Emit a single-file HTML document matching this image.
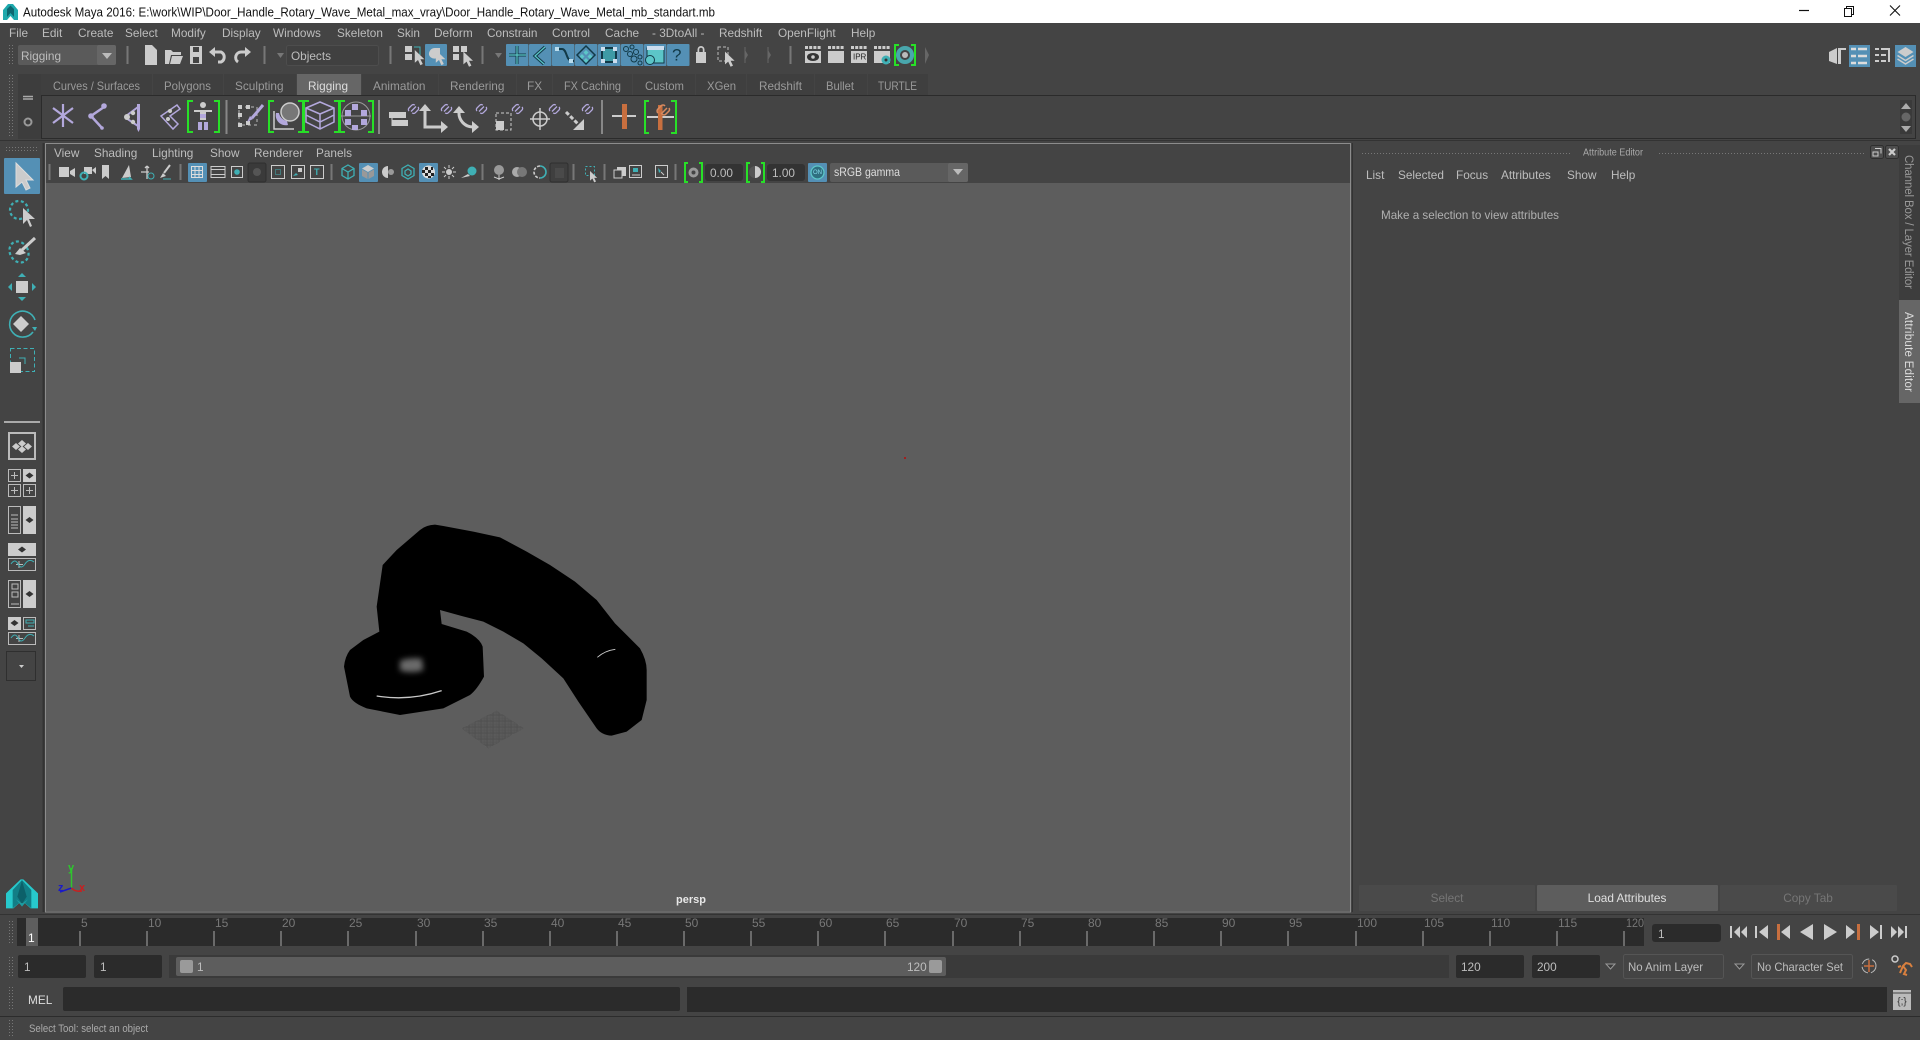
<!DOCTYPE html>
<html><head><meta charset="utf-8"><title>Autodesk Maya 2016</title>
<style>
html,body{margin:0;padding:0;background:#444;overflow:hidden;width:1920px;height:1040px}
svg{display:block;position:absolute;left:0;top:0}
text{font-family:"Liberation Sans",sans-serif;font-size:11.8px;fill:#bdbdbd;dominant-baseline:central;white-space:pre}
text.tab{fill:#9a9a9a}
.l{fill:#ccc}.ls{fill:none;stroke:#ccc}
.t{fill:#3fb0b5}.ts{fill:none;stroke:#3fb0b5}
.p{fill:#b3a8dc}.ps{fill:none;stroke:#b3a8dc}
.g{fill:none;stroke:#27e027;stroke-width:2}
.tl{fill:#777;font-size:12px}
</style></head><body>
<svg width="1920" height="1040" viewBox="0 0 1920 1040" xmlns="http://www.w3.org/2000/svg">
<defs>
<pattern id="dots" width="3" height="3" patternUnits="userSpaceOnUse"><rect width="1" height="1" fill="#777"/></pattern>
<pattern id="gridp" width="3.600" height="3.600" patternUnits="userSpaceOnUse"><rect width="3.600" height="3.600" fill="#4e4e4e"/><rect width="1.600" height="1.600" fill="#777"/></pattern>
<path id="arr" d="M0 0V16L4 12.5L7 19L10 17.5L7 11.5L12 11.5Z"/>
<g id="lnk"><path d="M-1 4.500L4 -.5M-3 4a2.100 2.100 0 0 1 0-3l2.800-2.800a2.100 2.100 0 0 1 3 0M6 0a2.100 2.100 0 0 1 0 3L3.200 5.800a2.100 2.100 0 0 1-3 0" fill="none" stroke="#b3a8dc" stroke-width="1.300"/></g>
<g id="clap"><path d="M0 1.500h16" stroke="#ccc" stroke-width="3" stroke-dasharray="3 1.200"/><rect y="5" width="16" height="12" fill="#ccc"/></g>
</defs>
<rect width="1920" height="1040" fill="#444"/>

<!-- title bar -->
<rect width="1920" height="23" fill="#fff"/>
<path d="M3 20V10L8 4h5l5 6v10h-4l-3.500-4-3.500 4z" fill="#1fa9ad"/><path d="M7 17V9l3.500-3.500L14 9v8l-3.500-4z" fill="#0d6770"/>
<text x="23" y="12" style="font-size:13px;fill:#111" textLength="692" lengthAdjust="spacingAndGlyphs">Autodesk Maya 2016: E:\work\WIP\Door_Handle_Rotary_Wave_Metal_max_vray\Door_Handle_Rotary_Wave_Metal_mb_standart.mb</text>
<path d="M1799 10.500h10" stroke="#111" stroke-width="1.200"/>
<path d="M1844.500 8.500h7v8h-7zM1846.500 8.500V6.500h7v8h-2" fill="none" stroke="#111"/>
<path d="M1890 5.500l10 10M1900 5.500l-10 10" stroke="#111" stroke-width="1.100"/>

<!-- menu -->
<g>
<text x="9" y="33">File</text><text x="42" y="33">Edit</text><text x="78" y="33">Create</text><text x="125" y="33">Select</text><text x="171" y="33">Modify</text><text x="222" y="33">Display</text><text x="273" y="33">Windows</text><text x="337" y="33">Skeleton</text><text x="397" y="33">Skin</text><text x="434" y="33">Deform</text><text x="487" y="33">Constrain</text><text x="552" y="33">Control</text><text x="605" y="33">Cache</text><text x="652" y="33">- 3DtoAll -</text><text x="719" y="33">Redshift</text><text x="778" y="33">OpenFlight</text><text x="851" y="33">Help</text>
</g>

<!-- status line -->
<rect x="8" y="45" width="5" height="20" fill="url(#dots)"/>
<rect x="18" y="45" width="98" height="20" rx="2" fill="#5a5a5a"/><rect x="97" y="45" width="19" height="20" rx="2" fill="#666"/>
<path d="M102 53h10l-5 6z" fill="#bbb"/>
<text x="21" y="56">Rigging</text>
<path d="M127.500 46v18M264.500 46v18M390.500 46v18M482.500 46v18M790.500 46v18" stroke="#777" stroke-width="2"/>
<path class="l" d="M145 45h7l5 5v15h-12z"/>
<path class="l" d="M165 50h6l2 2h8v3h-10l-2 9h-4zM172 56h11l-3 8h-10z"/>
<path class="l" d="M190 46h12v18h-12zM193 47v5h6v-5zM193 57v6h6v-6z" fill-rule="evenodd"/>
<path class="ls" stroke-width="3" d="M212 52h9a5.500 5.500 0 0 1 0 10h-3"/><path class="l" d="M209 52l6-5v10z"/>
<path class="ls" stroke-width="3" d="M248 52h-7a5.500 5.500 0 0 0-3 10"/><path class="l" d="M251 52l-6-5v10z"/>
<path d="M277 53h7l-3.500 5z" fill="#777"/>
<rect x="286.500" y="45.500" width="92" height="20" rx="2" fill="#404040" stroke="#4d4d4d"/>
<text x="291" y="56">Objects</text>
<path class="l" d="M405 46h7v6h-7zM405 54h7v6h-7z"/><path class="ts" d="M414 47h6v8"/><use href="#arr" x="416" y="50" class="l" transform="translate(82 10) scale(.8)"/>
<rect x="425" y="44" width="22" height="22" rx="1" fill="#5490b5"/><path class="l" d="M429 55a6 6 0 0 1 6-7h5v7a6 6 0 0 1-11 0z"/><use href="#arr" class="l" x="436" y="50" transform="translate(87 10) scale(.8)"/>
<path class="l" d="M453 46h6v6h-6zM461 46h6v6h-6zM453 54h6v6h-6z"/><use href="#arr" class="l" x="463" y="52" transform="translate(93 10) scale(.8)"/>
<path d="M495 53h7l-3.500 5z" fill="#777"/>
<g>
<g fill="#5490b5"><rect x="506" y="44" width="22.500" height="22" rx="1"/><rect x="529" y="44" width="22.500" height="22" rx="1"/><rect x="552" y="44" width="22.500" height="22" rx="1"/><rect x="575" y="44" width="22.500" height="22" rx="1"/><rect x="598" y="44" width="22.500" height="22" rx="1"/><rect x="621" y="44" width="22.500" height="22" rx="1"/><rect x="644" y="44" width="22.500" height="22" rx="1"/><rect x="667" y="44" width="22.500" height="22" rx="1"/></g>
<path d="M517 46v18M509 55h17" stroke="#123a48" stroke-width="3"/><path d="M517 46v18M509 55h17" stroke="#5cc6c8" stroke-width="1.200"/>
<path d="M545 47l-10 9 9 8" fill="none" stroke="#123a48" stroke-width="3.200"/><path d="M545 47l-10 9 9 8" fill="none" stroke="#5cc6c8" stroke-width="1.200"/>
<path d="M556 49h6c5 0 4 12 10 12h2" fill="none" stroke="#123a48" stroke-width="2"/><rect x="555" y="47" width="4" height="4" fill="#bde"/><rect x="569" y="59" width="4" height="4" fill="#bde"/>
<path d="M586 46l9 9-9 9-9-9z" fill="none" stroke="#123a48" stroke-width="1.500"/><path d="M586 50l2.500 2.500-2.500 2.500-2.500-2.500zM582 54l2.500 2.500-2.500 2.500-2.500-2.500zM590 54l2.500 2.500-2.500 2.500-2.500-2.500zM586 58l2.500 2.500-2.500 2.500-2.500-2.500z" fill="#5cc6c8"/>
<rect x="602" y="48" width="14" height="14" fill="#3e9aa5" stroke="#123a48" stroke-width="2"/><path d="M601 47h4v4h-4zM613 47h4v4h-4zM601 59h4v4h-4zM613 59h4v4h-4z" fill="#cde"/>
<g fill="none" stroke="#123a48"><circle cx="626" cy="49" r="2.500"/><circle cx="632" cy="47" r="2"/><circle cx="630" cy="54" r="2.500"/><circle cx="636" cy="52" r="2.500"/><circle cx="634" cy="59" r="3"/><circle cx="640" cy="57" r="2"/><circle cx="640" cy="63" r="2"/></g>
<rect x="647" y="48" width="17" height="15" fill="#5cc6c8" stroke="#123a48"/><rect x="647" y="46" width="17" height="4" fill="#cde"/><circle cx="650" cy="60" r="4.500" fill="#5cc6c8" stroke="#123a48"/>
<text x="672" y="55" style="font-size:17px;fill:#123a48">?</text>
</g>
<path class="l" d="M696 52h10v11h-10zM697.500 52v-2.500a3.500 3.500 0 0 1 7 0V52h-1.700v-2.500a1.800 1.800 0 0 0-3.600 0V52z"/>
<rect x="718" y="47" width="10" height="14" fill="none" stroke="#bbb" stroke-dasharray="3 2"/><use href="#arr" class="l" x="725" y="52" transform="translate(145 10) scale(.8)"/>
<path d="M745 50l3 5-3 5zM768 50l3 5-3 5z" fill="#666"/><path d="M745 47v16M768 47v16" stroke="#666"/>
<use href="#clap" x="805" y="46"/><use href="#clap" x="828" y="46"/><use href="#clap" x="851" y="46"/><use href="#clap" x="874" y="46"/>
<ellipse cx="813" cy="57" rx="6" ry="4" fill="#333"/><circle cx="813" cy="57" r="1.800" fill="#ccc"/>
<text x="853" y="57" style="font-size:8px;fill:#222">IPR</text>
<circle cx="886" cy="60" r="4.500" fill="#3fb0b5"/><circle cx="886" cy="60" r="1.500" fill="#333"/>
<path class="g" d="M899 45h-4v20h4M911 45h4v20h-4"/><circle cx="905" cy="55" r="7" fill="none" stroke="#49a7ad" stroke-width="4"/><circle cx="905" cy="55" r="3" fill="#bbb"/>
<path d="M925 47l4 8-4 9z" fill="#666"/>

<!-- workspace icons -->
<path class="l" d="M1829 52l8-4v16l-8-3zM1838 48h8v2h-5v14h-3z"/>
<rect x="1849" y="45" width="21" height="22" fill="#5490b5"/><path d="M1851 49h5M1858 49h9M1851 56h5M1858 56h9M1851 63h5M1858 63h9" stroke="#ddd" stroke-width="2.500"/>
<path d="M1875 49h4M1881 49h9M1875 55h4M1881 55h5M1875 61h4M1881 61h5M1889 49v13" stroke="#ccc" stroke-width="2"/>
<rect x="1895" y="45" width="21" height="22" fill="#5490b5"/><path d="M1905.500 47l8 5-8 5-8-5z" class="l"/><path d="M1897.500 55.500l8 5 8-5M1897.500 59l8 5 8-5" class="ls" stroke-width="1.500"/>

<!-- shelf -->
<rect x="8" y="75" width="5" height="62" fill="url(#dots)"/>
<rect x="18" y="74" width="23" height="65" fill="#3d3d3d"/>
<path d="M23 96.500h10M23 99h10" stroke="#aaa" stroke-width="1.500"/>
<circle cx="28" cy="122" r="3.500" fill="none" stroke="#999" stroke-width="2"/>
<g fill="#3f3f3f">
<rect x="41" y="74" width="111" height="21"/><rect x="153" y="74" width="70" height="21"/><rect x="224" y="74" width="72" height="21"/><rect x="362" y="74" width="76" height="21"/><rect x="439" y="74" width="77" height="21"/><rect x="517" y="74" width="35" height="21"/><rect x="553" y="74" width="79" height="21"/><rect x="633" y="74" width="62" height="21"/><rect x="696" y="74" width="50" height="21"/><rect x="747" y="74" width="67" height="21"/><rect x="815" y="74" width="52" height="21"/><rect x="868" y="74" width="60" height="21"/>
</g>
<rect x="297" y="74" width="64" height="21" fill="#666"/>
<g>
<text x="53" y="86" class="tab" textLength="87" lengthAdjust="spacingAndGlyphs">Curves / Surfaces</text><text x="164" y="86" class="tab" textLength="47" lengthAdjust="spacingAndGlyphs">Polygons</text><text x="235" y="86" class="tab">Sculpting</text><text x="308" y="86" style="fill:#ddd">Rigging</text><text x="373" y="86" class="tab">Animation</text><text x="450" y="86" class="tab">Rendering</text><text x="527" y="86" class="tab">FX</text><text x="564" y="86" class="tab" textLength="57" lengthAdjust="spacingAndGlyphs">FX Caching</text><text x="645" y="86" class="tab" textLength="39" lengthAdjust="spacingAndGlyphs">Custom</text><text x="707" y="86" class="tab" textLength="29" lengthAdjust="spacingAndGlyphs">XGen</text><text x="759" y="86" class="tab" textLength="43" lengthAdjust="spacingAndGlyphs">Redshift</text><text x="826" y="86" class="tab" textLength="28" lengthAdjust="spacingAndGlyphs">Bullet</text><text x="878" y="86" class="tab" textLength="39" lengthAdjust="spacingAndGlyphs">TURTLE</text>
</g>
<rect x="41.500" y="95.500" width="1874" height="43" fill="#444" stroke="#2b2b2b"/>
<rect x="1900" y="100" width="12" height="34" fill="#3a3a3a"/><path d="M1906 103l5 6h-10zM1906 132l5-6h-10z" fill="#aaa"/><circle cx="1906" cy="117" r="4.500" fill="#666"/>
<!-- shelf icons -->
<path class="ps" stroke-width="2.200" d="M63 104v23M53 108l20 15M73 108l-20 15"/>
<path class="ps" stroke-width="2.500" d="M104 107l-13 9 11 12"/><circle cx="104" cy="106" r="2.800" class="p"/><circle cx="91" cy="116" r="2.800" class="p"/><circle cx="102" cy="128" r="1.800" class="p"/>
<path class="ps" stroke-width="2" d="M126 116l12-9M126 118l12 8"/><path class="p" d="M137 104h3v25l-1.500 3-1.500-3z"/><circle cx="127" cy="117" r="3" class="l"/><circle cx="133" cy="113" r="2.200" class="l"/><circle cx="133" cy="122" r="2.200" class="l"/>
<path class="ps" stroke-width="1.500" d="M177 105l-16 11 12 13 5-5-8-8 10-7z"/><circle cx="170" cy="111" r="2" class="l"/><circle cx="168" cy="119" r="2" class="l"/>
<path class="g" d="M193 101h-5V132h5M214 101h5V132h-5"/>
<circle cx="203" cy="105" r="3" class="l"/><path class="l" d="M194 110h18v2h-6v8h-6v-8h-6z"/><rect x="198" y="122" width="4" height="8" fill="#b3a8dc"/><rect x="204" y="122" width="4" height="8" fill="#b3a8dc"/><rect x="200" y="114" width="6" height="4" fill="#b3a8dc"/>
<path d="M226.500 100v34" stroke="#888" stroke-width="2"/>
<rect x="239" y="107" width="18" height="18" fill="none" stroke="#bbb" stroke-dasharray="3 3"/><g class="l"><rect x="238" y="105" width="4" height="4"/><rect x="246" y="105" width="4" height="4"/><rect x="238" y="113" width="4" height="4"/><rect x="246" y="121" width="4" height="4"/><rect x="238" y="123" width="4" height="4"/></g><path class="ps" stroke-width="3" d="M263 105l-11 13"/><path class="p" d="M247 122l3-6 3 3z"/>
<path class="g" d="M274 101h-5V132h5M298 101h5V132h-5"/><circle cx="290" cy="112" r="9" fill="#777" stroke="#ccc" stroke-width="1.500"/><path class="p" d="M276 113a10 10 0 0 0 12 12l-1-4a10 10 0 0 1-8-8z"/><path class="ls" stroke-width="1.500" d="M274 111v18h20"/>
<path class="g" d="M309 101h-5V132h5M334 101h5V132h-5"/><path class="ps" stroke-width="1.500" d="M306 108l14-6 14 6v14l-14 7-14-7zM306 108l14 6 14-6M320 114v15M306 115l14 7 14-7"/>
<path class="g" d="M345 101h-5V132h5M368 101h5V132h-5"/><circle cx="356" cy="116" r="14" fill="none" stroke="#999"/><path d="M341 116h30" stroke="#999"/><g class="p"><rect x="352" y="104" width="6" height="6"/><rect x="345" y="110" width="6" height="6"/><rect x="361" y="110" width="6" height="6"/><rect x="345" y="119" width="6" height="6"/><rect x="361" y="119" width="6" height="6"/><rect x="352" y="125" width="6" height="5"/></g>
<path d="M379 100v34" stroke="#888" stroke-width="2"/>
<g class="l"><path d="M389 112h17v6h-17zM392 120h16v6h-16z"/></g><path class="ls" d="M392 118v8"/><use href="#lnk" x="412" y="107"/>
<path class="ls" stroke-width="3" d="M425 110v17h17"/><path class="l" d="M425 104l6 7h-12zM448 127l-7-6v12z"/><use href="#lnk" x="445" y="107"/>
<path class="ls" stroke-width="3" d="M459 112a14 14 0 0 0 14 15"/><path class="l" d="M459 106l6 7h-12zM479 127l-7-6v12z"/><use href="#lnk" x="480" y="107"/>
<rect x="496" y="113" width="15" height="17" fill="none" stroke="#ccc" stroke-dasharray="3 2"/><rect x="496" y="121" width="8" height="9" class="l"/><use href="#lnk" x="516" y="107"/>
<circle cx="540" cy="119" r="7" fill="none" stroke="#ccc" stroke-width="1.500"/><path d="M540 108v22M530 119h20" stroke="#ccc" stroke-width="1.500"/><use href="#lnk" x="553" y="107"/>
<path class="ls" stroke-width="3" stroke-dasharray="4 2" d="M566 112l14 14"/><path class="l" d="M584 130v-11l-11 11z"/><use href="#lnk" x="586" y="107"/>
<path d="M602 100v34" stroke="#888" stroke-width="2"/>
<path d="M612 116h24" stroke="#ccc" stroke-width="2"/><rect x="622" y="104" width="5" height="25" fill="#c86f3f"/>
<path class="g" d="M649 101h-4V133h4M671 101h5V133h-5"/><path d="M647 117h27" stroke="#ccc" stroke-width="2"/><rect x="658" y="105" width="4.500" height="25" fill="#c86f3f"/><path d="M661 114l6-6M658 113a2.600 2.600 0 0 1 0-4l3-3a2.600 2.600 0 0 1 4 0M669 108a2.600 2.600 0 0 1 0 3l-3 3a2.600 2.600 0 0 1-4 0" fill="none" stroke="#d98a5f" stroke-width="1.500"/>

<!-- separators -->
<path d="M0 140.500h1920" stroke="#333" stroke-width="1"/>

<!-- left toolbox -->
<rect x="4" y="146" width="34" height="6" fill="url(#dots)"/>
<rect x="4" y="158" width="36" height="36" rx="1" fill="#5490b5"/>
<path class="l" d="M16 163V187L22 182L26 190L30 188L26 180L33 180Z" stroke="#ddd"/>
<ellipse cx="19" cy="210" rx="9" ry="9" fill="none" stroke="#3fb0b5" stroke-width="2.200" stroke-dasharray="3 2.500" transform="rotate(35 19 210)"/>
<path class="l" d="M23 208V224L27 220L30 227L32 226L29 219L35 219Z"/>
<ellipse cx="19" cy="252" rx="9" ry="11" fill="none" stroke="#3fb0b5" stroke-width="2.200" stroke-dasharray="3 2.500" transform="rotate(-30 19 252)"/>
<path class="ls" stroke-width="3" d="M35 238l-13 12"/><path class="l" d="M15 254l5-6 6 5-6 2z"/>
<rect x="16" y="281" width="12" height="12" class="l"/><path class="t" d="M22 273l4 4h-8zM22 301l4-4h-8zM8 287l4-4v8zM36 287l-4-4v8z"/>
<path d="M35 320a13 13 0 1 0-2 12" class="ts" stroke-width="1.600"/><path class="t" d="M32 327h5l-2 4z"/><path class="l" d="M21 316l8 8-8 8-8-8z"/>
<rect x="10.500" y="348.500" width="24" height="23" fill="none" stroke="#3fb0b5" stroke-dasharray="4 2.500"/><path class="ts" d="M19 358h6v6"/><rect x="10" y="362" width="11" height="11" class="l"/>
<path d="M4 422h36" stroke="#aaa" stroke-width="2"/>
<rect x="9" y="433" width="26" height="26" fill="none" stroke="#bbb" stroke-width="2"/>
<path d="M22 440l4 3.500-4 3.500-4-3.500zM16 443l4 3.500-4 3.500-4-3.500zM28 443l4 3.500-4 3.500-4-3.500zM22 446l4 3.500-4 3.500-4-3.500z" fill="#ccc"/>
<g fill="none" stroke="#bbb">
<rect x="8.500" y="469.500" width="12" height="12"/><rect x="8.500" y="484.500" width="12" height="12"/><rect x="23.500" y="484.500" width="12" height="12"/>
<rect x="8.500" y="506.500" width="12" height="27"/><rect x="8.500" y="558.500" width="27" height="12"/><rect x="8.500" y="580.500" width="12" height="27"/><rect x="23.500" y="617.500" width="12" height="12"/><rect x="8.500" y="632.500" width="27" height="12"/>
<path d="M14.500 472v7M11 475.500h7M14.500 487v7M11 490.500h7M29.500 487v7M26 490.500h7M11 515h7M11 519h7M11 522h7M11 525h7M11 528h7M19 561v7M16 564.500h7M19 635v7M16 638.500h7"/>
</g>
<g fill="#ccc"><rect x="23" y="469" width="13" height="13"/><rect x="23" y="506" width="13" height="28"/><rect x="8" y="543" width="28" height="13"/><rect x="23" y="580" width="13" height="28"/><rect x="8" y="617" width="13" height="13"/></g>
<g fill="#333"><path d="M29.500 472.500l4 3-4 3-4-3zM29.500 517l4 3-4 3-4-3zM22 546.500l4 3-4 3-4-3zM29.500 591l4 3-4 3-4-3zM14.500 620l4 3-4 3-4-3z"/></g>
<path class="ts" d="M11 564q4-6 7 0t7 0t9-2M11 638q4-6 7 0t7 0t9-2M26 620h8v3h-8zM28 626h6"/>
<g fill="none" stroke="#bbb"><rect x="12" y="584" width="6" height="5"/><rect x="12" y="592" width="6" height="5"/><path d="M11 604h8"/></g>
<rect x="6.500" y="651.500" width="29" height="29" fill="none" stroke="#2f2f2f"/><path d="M19 665h5l-2.500 3z" fill="#ccc"/>
<path d="M43.500 143V912" stroke="#333" stroke-width="2"/>
<!-- logo -->
<g transform="translate(0 460) scale(.33333)">
<path d="M18 1300L62 1258H70L114 1300V1345H92L66 1322L40 1345H18Z" fill="#27c9cc"/>
<path d="M38 1345V1290L66 1260L94 1290V1345L66 1322Z" fill="#127e86"/>
<path d="M52 1310L66 1262L80 1310L66 1332Z" fill="#0c6069"/>
<path d="M48 1318L66 1340L84 1318L66 1330Z" fill="#1b9ea3"/>
</g>

<!-- viewport -->
<rect x="45" y="143" width="1306" height="770" fill="#444"/>
<rect x="46" y="183" width="1304" height="728" fill="#5d5d5d"/>
<rect x="45.500" y="143.500" width="1305" height="768.500" fill="none" stroke="#8c8c8c"/>
<rect x="46" y="144" width="1304" height="39" fill="#444"/>
<text x="54" y="153">View</text><text x="94" y="153">Shading</text><text x="152" y="153">Lighting</text><text x="210" y="153">Show</text><text x="254" y="153">Renderer</text><text x="316" y="153">Panels</text>
<!-- viewport toolbar -->
<path d="M49.500 164v16M180.500 164v16M331.500 164v16M482.500 164v16M573.500 164v16M604.500 164v16M675.500 164v16" stroke="#777" stroke-width="2"/>
<rect x="188" y="163" width="19" height="19" rx="1" fill="#5490b5"/><rect x="359" y="163" width="19" height="19" rx="1" fill="#5490b5"/><rect x="419" y="163" width="19" height="19" rx="1" fill="#5490b5"/>
<rect x="248" y="163" width="18" height="19" rx="2" fill="#3a3a3a" stroke="#2f2f2f"/><rect x="550" y="163" width="18" height="19" rx="2" fill="#3f3f3f" stroke="#2f2f2f"/>
<path class="l" d="M59 167h10v10H59zM70 171l5-3v9l-5-3z"/>
<path class="l" d="M84 167h8v7h-8zM92 170l4-3v7z"/><circle cx="84" cy="176" r="3.500" fill="none" stroke="#3fb0b5" stroke-width="2"/>
<path class="l" d="M102 165h7v14l-3.500-3-3.500 3z"/>
<path class="l" d="M122 178l7-13 2 12z"/><path class="ts" stroke-width="1.500" d="M121 179h10l-2-2"/>
<path class="ls" stroke-width="1.300" d="M147 166v13M141 172h8M147 166l-2 2M147 166l2 2"/><circle cx="151" cy="176" r="3" class="ts"/>
<path class="ls" stroke-width="2" d="M170 165l-6 8"/><path class="l" d="M160 178l3-5 3 3z"/><path class="ts" d="M163 179h8"/>
<path d="M191.500 166.500h11v11h-11zM195 166.500v11M199 166.500v11M191.500 170.500h11M191.500 174.500h11" fill="none" stroke="#ddd"/>
<path d="M211 166.500h14v11h-14zM211 169.500h14M211 174.500h14" fill="none" stroke="#ccc"/>
<rect x="231.500" y="166.500" width="11" height="11" fill="none" stroke="#ccc"/><circle cx="237" cy="172" r="2.800" class="t"/>
<circle cx="257" cy="172" r="4" fill="#555"/>
<rect x="271.500" y="165.500" width="13" height="13" fill="none" stroke="#ccc"/><rect x="275.500" y="169.500" width="5" height="5" fill="none" stroke="#3fb0b5" stroke-dasharray="1 1"/>
<rect x="291.500" y="165.500" width="13" height="13" fill="none" stroke="#ccc"/><path class="t" d="M293 176l3-3 2 2z"/><rect x="298" y="168" width="4" height="4" class="l"/>
<rect x="310.500" y="165.500" width="13" height="13" fill="none" stroke="#ccc"/><text x="314" y="172" style="font-size:9px;font-weight:bold;fill:#3fb0b5">T</text>
<path class="ts" stroke-width="1.300" d="M348 165l6 3.500v7l-6 3.500-6-3.500v-7zM342 168.500l6 3.500 6-3.500M348 172v7"/>
<path class="l" d="M368 165l6 3.500-6 3.500-6-3.500z"/><path fill="#999" d="M362 169.500l5.500 3v6.500l-5.500-3zM374 169.500l-5.500 3v6.500l5.500-3z"/>
<path class="l" d="M388 166a6 6 0 0 0 0 12z"/><circle cx="391" cy="172" r="3" fill="#999"/>
<path class="ts" stroke-width="1.300" d="M408 165l6 3.500v7l-6 3.500-6-3.500v-7zM405 171l3-2 3 2v3l-3 2-3-2z"/>
<circle cx="428.500" cy="172" r="6.500" fill="#ddd"/><path d="M425 167h3v3h-3zM431 167h2v3h-2zM428 170h3v3h-3zM422 170h3v3h-3zM425 173h3v3h-3zM431 173h3v3h-3zM428 176h3v2h-3z" fill="#222"/>
<circle cx="449" cy="172" r="3" class="l"/><path class="ls" d="M449 165v3M449 176v3M442 172h3M453 172h3M444 167l2 2M454 167l-2 2M444 177l2-2M454 177l-2-2"/>
<path class="l" d="M461 178l7-4 2 2z"/><circle cx="472" cy="171" r="4.500" class="t"/>
<circle cx="499" cy="170" r="5" fill="#999"/><path d="M494 177l5 2 5-2M499 175v5" class="ls"/>
<circle cx="517" cy="172" r="5" fill="#aaa"/><circle cx="522" cy="172" r="5" fill="#777"/>
<path d="M540 166a6 6 0 0 0 0 12" class="ls" stroke-width="1.600" stroke-dasharray="3 1.500"/><path d="M540 166a6 6 0 0 1 0 12" class="ts" stroke-width="1.600"/>
<rect x="555" y="168" width="9" height="10" fill="#4a4a4a"/>
<rect x="585.500" y="166.500" width="9" height="9" fill="none" stroke="#3fb0b5" stroke-dasharray="2 2"/><use href="#arr" class="l" x="0" y="0" transform="translate(590 171) scale(.6)"/>
<path class="l" d="M617 167h9v9h-9z"/><rect x="614" y="170" width="8" height="8" fill="#444" stroke="#ccc"/>
<rect x="629.500" y="165.500" width="12" height="12" fill="none" stroke="#ccc"/><rect x="633" y="168" width="5" height="4" class="t"/><path d="M632 175h8" stroke="#ccc"/>
<rect x="655.500" y="165.500" width="12" height="12" fill="none" stroke="#ccc"/><path class="t" d="M658 168l3 3-2 2z"/><path d="M661 172l3 3" stroke="#ccc"/>
<path class="g" d="M688 163h-3v19h3M699 163h3v19h-3"/><circle cx="693.500" cy="172.500" r="5" fill="#999"/><circle cx="693.500" cy="172.500" r="2" fill="#444"/>
<rect x="705" y="164" width="38" height="17" rx="3" fill="#333"/><text x="710" y="173">0.00</text>
<path class="g" d="M750 163h-3v19h3M761 163h3v19h-3"/><path class="l" d="M755 166a6 6 0 0 1 0 12z"/><path d="M755 166a6 6 0 0 0 0 12z" fill="#555"/>
<rect x="767" y="164" width="38" height="17" rx="3" fill="#333"/><text x="772" y="173">1.00</text>
<rect x="808" y="163" width="19" height="19" rx="1" fill="#5490b5"/><circle cx="817.500" cy="172.500" r="6.500" fill="#2f6f80" stroke="#5cc6c8" stroke-width="1.300"/><text x="817.500" y="173" text-anchor="middle" style="font-size:6px;fill:#8de">ON</text>
<rect x="830" y="163" width="138" height="19" rx="2" fill="#5a5a5a"/><rect x="948" y="163" width="20" height="19" rx="2" fill="#666"/><path d="M953 169h10l-5 6z" fill="#bbb"/>
<text x="834" y="172" style="fill:#ddd" textLength="66" lengthAdjust="spacingAndGlyphs">sRGB gamma</text>

<!-- 3D handle -->
<g transform="translate(320 500) scale(.33333)">
<path d="M300 90Q318 75 345 74L370 78L460 95L540 112L620 155L690 195L765 245L830 300L885 370L960 445Q980 480 980 510V600L965 660L920 695L875 707Q845 705 830 685L775 605L730 535L665 475L610 430L550 395L490 365L425 348L360 330L365 372L440 395Q480 415 488 440L492 530Q470 570 450 585L370 625L240 645L140 625Q100 610 90 590L72 500Q75 470 90 450L130 420L178 395L170 320L188 195L230 150Z" fill="#000"/>
<path d="M240 482Q270 472 306 476L310 510Q280 522 240 512Z" fill="#6a6a6a" style="filter:blur(9px)"/>
<path d="M170 588Q270 604 365 572" fill="none" stroke="#c8c8c8" stroke-width="4"/>
<path d="M832 472Q855 452 886 448" fill="none" stroke="#ccc" stroke-width="2.500"/>
<path d="M425 685L530 632L612 685L505 745Z" fill="url(#gridp)"/>
</g>
<rect x="904" y="457" width="2" height="2" fill="#a02020"/>
<!-- axis -->
<path d="M71.500 888V868" stroke="#2fc52f" stroke-width="1.500"/><path d="M71.500 888L60 892" stroke="#1a1ac8" stroke-width="1.500"/><path d="M71.500 888Q75 892 82 891" stroke="#c82020" stroke-width="1.500" fill="none"/>
<text x="68" y="868" style="font-size:11px;font-weight:bold;fill:#2fc52f">y</text>
<text x="58" y="888" style="font-size:11px;font-weight:bold;fill:#1a1ac8">z</text>
<text x="79" y="888" style="font-size:11px;font-weight:bold;fill:#c82020">x</text>
<text x="676" y="900" style="font-size:11px;font-weight:bold;fill:#e8e8e8">persp</text>

<!-- attribute editor -->
<path d="M1352.500 143V912" stroke="#333"/>
<rect x="1360" y="152" width="212" height="3" fill="url(#dots)"/><rect x="1657" y="152" width="208" height="3" fill="url(#dots)"/>
<text x="1583" y="153" style="font-size:10px;fill:#aaa" textLength="60" lengthAdjust="spacingAndGlyphs">Attribute Editor</text>
<rect x="1870.500" y="145.500" width="13" height="13" rx="2" fill="#4d4d4d" stroke="#2f2f2f"/><rect x="1885.500" y="145.500" width="13" height="13" rx="2" fill="#4d4d4d" stroke="#2f2f2f"/>
<path class="ls" d="M1875 148.500h6v5M1873 152h5v4h-5z"/><path class="ls" stroke-width="2.200" d="M1889 149l6 6M1895 149l-6 6"/>
<text x="1366" y="175">List</text><text x="1398" y="175">Selected</text><text x="1456" y="175">Focus</text><text x="1501" y="175">Attributes</text><text x="1567" y="175">Show</text><text x="1611" y="175">Help</text>
<text x="1381" y="215" style="fill:#b0b0b0" textLength="178" lengthAdjust="spacingAndGlyphs">Make a selection to view attributes</text>
<rect x="1899" y="145" width="21" height="155" fill="#3d3d3d"/>
<rect x="1899" y="300" width="21" height="103" fill="#666"/>
<text transform="translate(1908 155) rotate(90)" style="font-size:11.500px;fill:#999" textLength="134">Channel Box / Layer Editor</text>
<text transform="translate(1908 312) rotate(90)" style="font-size:11.500px;fill:#ddd" textLength="80">Attribute Editor</text>
<rect x="1359" y="885" width="176" height="26" rx="1" fill="#4a4a4a"/><rect x="1537" y="885" width="181" height="26" rx="1" fill="#5d5d5d"/><rect x="1720" y="885" width="177" height="26" rx="1" fill="#4a4a4a"/>
<text x="1447" y="898" text-anchor="middle" style="fill:#767676">Select</text><text x="1627" y="898" text-anchor="middle" style="fill:#e0e0e0">Load Attributes</text><text x="1808" y="898" text-anchor="middle" style="fill:#767676">Copy Tab</text>

<!-- timeline -->
<path d="M0 914.500h1920" stroke="#333" stroke-width="1"/>
<rect x="8" y="919" width="5" height="26" fill="url(#dots)"/>
<rect x="17" y="918" width="1627" height="28" fill="#2b2b2b"/>
<rect x="26" y="918" width="12" height="28" fill="#5e5e5e"/>
<text x="28" y="938" style="fill:#fff;font-size:12px">1</text>
<path stroke="#808080" stroke-width="1.500" d="M80 931v15M147 931v15M214 931v15M281 931v15M348 931v15M416 931v15M483 931v15M550 931v15M617 931v15M684 931v15M751 931v15M818 931v15M885 931v15M953 931v15M1020 931v15M1087 931v15M1154 931v15M1221 931v15M1288 931v15M1356 931v15M1423 931v15M1490 931v15M1557 931v15M1624 931v15"/>
<g>
<text class="tl" x="81" y="923">5</text><text class="tl" x="148" y="923">10</text><text class="tl" x="215" y="923">15</text><text class="tl" x="282" y="923">20</text><text class="tl" x="349" y="923">25</text><text class="tl" x="417" y="923">30</text><text class="tl" x="484" y="923">35</text><text class="tl" x="551" y="923">40</text><text class="tl" x="618" y="923">45</text><text class="tl" x="685" y="923">50</text><text class="tl" x="752" y="923">55</text><text class="tl" x="819" y="923">60</text><text class="tl" x="886" y="923">65</text><text class="tl" x="954" y="923">70</text><text class="tl" x="1021" y="923">75</text><text class="tl" x="1088" y="923">80</text><text class="tl" x="1155" y="923">85</text><text class="tl" x="1222" y="923">90</text><text class="tl" x="1289" y="923">95</text><text class="tl" x="1357" y="923">100</text><text class="tl" x="1424" y="923">105</text><text class="tl" x="1491" y="923">110</text><text class="tl" x="1558" y="923">115</text><text class="tl" x="1626" y="923" textLength="18" lengthAdjust="spacingAndGlyphs">120</text>
</g>
<rect x="1652" y="924" width="69" height="18" rx="3" fill="#2b2b2b"/><text x="1658" y="934">1</text>
<!-- playback -->
<g class="l">
<path d="M1730 926h2v12h-2zM1734 932l6-6v12zM1741 932l6-6v12z"/>
<path d="M1755 926h2v12h-2zM1759 932l9-7v14z"/>
<path d="M1781 932l9-7v14z"/>
<path d="M1800 932l13-8v16z"/>
<path d="M1824 924l13 8-13 8z"/>
<path d="M1846 925l9 7-9 7z"/>
<path d="M1870 925l9 7-9 7zM1880 925h2v14h-2z"/>
<path d="M1891 926l6 6-6 6zM1898 926l6 6-6 6zM1905 926h2v12h-2z"/>
</g>
<rect x="1777" y="924" width="3" height="16" fill="#c86f3f"/><rect x="1857" y="924" width="3" height="16" fill="#c86f3f"/>

<!-- range -->
<rect x="8" y="956" width="5" height="22" fill="url(#dots)"/>
<rect x="18" y="955" width="68" height="23" rx="2" fill="#2b2b2b"/><rect x="94" y="955" width="68" height="23" rx="2" fill="#2b2b2b"/>
<text x="24" y="967">1</text><text x="100" y="967">1</text>
<rect x="169" y="955" width="1280" height="23" fill="#3a3a3a"/>
<rect x="176" y="957" width="770" height="19" rx="2" fill="#5d5d5d"/>
<rect x="180" y="960" width="13" height="13" rx="2" fill="#9a9a9a"/><rect x="929" y="960" width="13" height="13" rx="2" fill="#9a9a9a"/>
<text x="197" y="967">1</text><text x="907" y="967">120</text>
<rect x="1456" y="955" width="68" height="23" rx="2" fill="#2b2b2b"/><rect x="1532" y="955" width="68" height="23" rx="2" fill="#2b2b2b"/>
<text x="1461" y="967">120</text><text x="1537" y="967">200</text>
<path d="M1606 964h9l-4.500 5z" fill="#3a3a3a" stroke="#999"/><path d="M1735 964h9l-4.500 5z" fill="#3a3a3a" stroke="#999"/>
<rect x="1623.500" y="954.500" width="100" height="24" rx="2" fill="#444" stroke="#555"/><rect x="1751.500" y="954.500" width="101" height="24" rx="2" fill="#444" stroke="#555"/>
<text x="1628" y="967" textLength="75" lengthAdjust="spacingAndGlyphs">No Anim Layer</text><text x="1757" y="967" textLength="86" lengthAdjust="spacingAndGlyphs">No Character Set</text>
<circle cx="1869" cy="966" r="7" fill="none" stroke="#bbb" stroke-dasharray="9 3"/><path d="M1869 960v12M1864 966h10" stroke="#c86f3f" stroke-width="1.500"/>
<circle cx="1895" cy="959" r="3" fill="none" stroke="#ccc" stroke-width="1.500"/><path d="M1900 973l3-7 3-3 4 1 2 3M1903 966l3 4-2 4 3 1M1901 966l-3 1" fill="none" stroke="#d9803f" stroke-width="2"/>

<!-- command -->
<rect x="8" y="987" width="5" height="22" fill="url(#dots)"/>
<text x="28" y="1000" style="fill:#ddd">MEL</text>
<rect x="63" y="987" width="617" height="24" rx="2" fill="#2b2b2b"/>
<rect x="687" y="987" width="1200" height="25" fill="#2b2b2b"/>
<rect x="1893" y="990" width="18" height="20" fill="#bbb"/><path d="M1893 993h18" stroke="#444"/><text x="1902" y="1002" text-anchor="middle" style="font-size:10px;fill:#333">{;}</text>
<path d="M0 1016.500h1920" stroke="#2c2c2c"/>
<rect x="8" y="1020" width="5" height="16" fill="url(#dots)"/>
<text x="29" y="1029" style="font-size:11px;fill:#aaa" textLength="119" lengthAdjust="spacingAndGlyphs">Select Tool: select an object</text>
</svg>
</body></html>
